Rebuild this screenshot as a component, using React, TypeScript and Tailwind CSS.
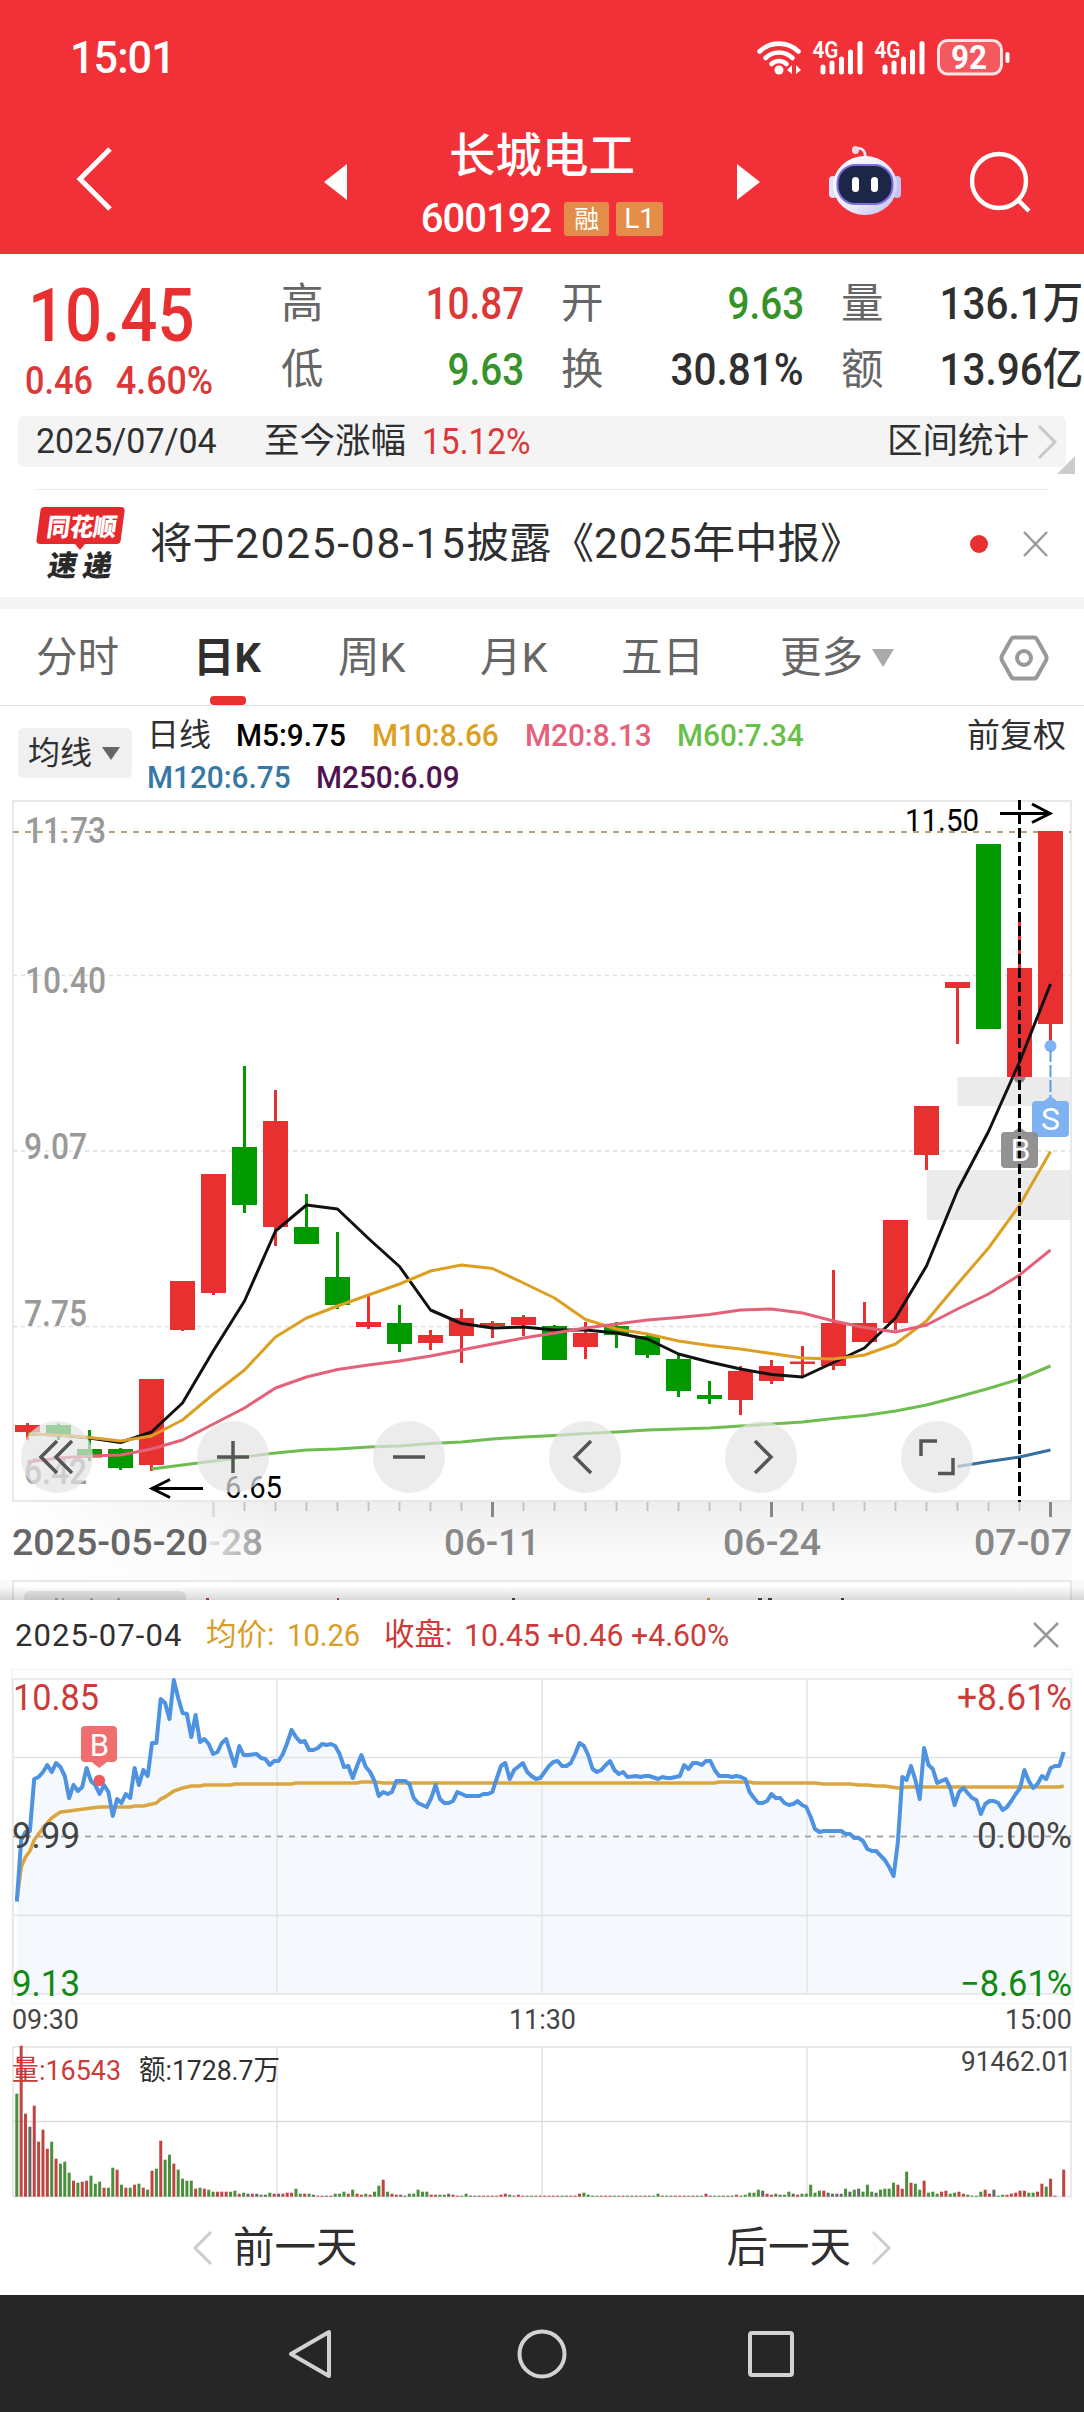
import type { ReactNode } from "react";

const RED = "#e83030";
const GREEN = "#009900";

const STEP = 31;
const FIRST = 27.5;
const cx = (i: number) => FIRST + i * STEP;

// [color, high, body top, body bottom, low]
const candles: [string, number, number, number, number][] = [
  ["r", 1423, 1425, 1432, 1440],
  ["g", 1423.5, 1425, 1436, 1440],
  ["g", 1430, 1449, 1457.5, 1461],
  ["g", 1448, 1449, 1468, 1470],
  ["r", 1379, 1379, 1465, 1471],
  ["r", 1281, 1281, 1330, 1331],
  ["r", 1174, 1174, 1293, 1295],
  ["g", 1066, 1147, 1205, 1213],
  ["r", 1090, 1121, 1227, 1246],
  ["g", 1194, 1227, 1244, 1244],
  ["g", 1232, 1277, 1305, 1309],
  ["r", 1296, 1322, 1327, 1329],
  ["g", 1305, 1323, 1344, 1352],
  ["r", 1330, 1335, 1343, 1350],
  ["r", 1309, 1318, 1336, 1363],
  ["r", 1321, 1323, 1326, 1338],
  ["r", 1315, 1317, 1325, 1336],
  ["g", 1325, 1326, 1360, 1360],
  ["r", 1322, 1333, 1347, 1359],
  ["g", 1322, 1326, 1335, 1348],
  ["g", 1334, 1336, 1355, 1358],
  ["g", 1355, 1359, 1391, 1397],
  ["g", 1381, 1395, 1399, 1404],
  ["r", 1366, 1371, 1400, 1415],
  ["r", 1360, 1366, 1381, 1384],
  ["r", 1346, 1361.5, 1364, 1376],
  ["r", 1270, 1323, 1366, 1370],
  ["r", 1302, 1323, 1342, 1342],
  ["r", 1220, 1220, 1323, 1330],
  ["r", 1106, 1106, 1155, 1170],
  ["r", 982, 982, 988, 1044],
  ["g", 844, 844, 1029, 1029],
  ["r", 913, 968, 1077, 1077],
  ["r", 831, 831, 1024, 1045],
];

const averages = [
  { color: "#111111", start: 0, ys: [1434, 1435, 1438, 1442.5, 1432, 1403, 1350.5, 1301, 1231, 1205, 1209, 1238.5, 1266.5, 1310, 1323.5, 1328, 1327, 1330, 1330, 1333, 1339, 1354, 1362, 1369, 1374.5, 1377, 1362.5, 1348, 1318, 1266, 1190.5, 1131.5, 1062, 984] },
  { color: "#dd9f22", start: 0, ys: [1434, 1435, 1437.5, 1441, 1436, 1420, 1394, 1370, 1337, 1318, 1306, 1295, 1284, 1271, 1265, 1268.5, 1283, 1298, 1319.5, 1329, 1334, 1341, 1345.5, 1349, 1353.5, 1358, 1359, 1355, 1344, 1321, 1284, 1248, 1205.5, 1151.5] },
  { color: "#e5617a", start: 0, ys: [1462, 1458, 1456, 1455, 1449, 1440, 1424, 1408, 1388, 1377, 1369.5, 1365, 1361, 1356, 1350, 1344, 1338, 1333, 1328, 1324, 1320, 1317.5, 1314.5, 1310, 1309, 1313, 1321, 1327.5, 1332, 1325, 1309, 1294, 1275, 1250] },
  { color: "#6fbd50", start: 4, ys: [1469, 1465, 1461, 1457, 1453, 1450, 1449, 1447, 1446, 1443.5, 1442, 1439, 1437, 1435.5, 1433.5, 1432, 1430, 1429, 1428, 1426, 1424, 1422, 1418.5, 1415.5, 1411, 1405, 1397, 1388.5, 1379, 1366] },
  { color: "#35709f", start: 30, ys: [1466.5, 1461.5, 1457, 1450] },
];

// minute, y offset inside the intraday chart
const price = "0,241.7 1,180 2,172 3,171 4,119 5,117 6,112 7,105 8,112 9,103 10,107 11,116 12,138 13,125 14,131 15,127 16,108 17,121 18,125 19,134 20,125 21,132 22,156 23,139 24,143 25,134 26,138 27,108 28,125 29,110 30,116 31,83 32,83 33,39 34,43 35,59 36,20 37,38 38,53 39,54 40,77 41,55 42,82 43,79 44,84 45,94 46,92 47,83 48,79 49,93 50,106 51,86 52,95 53,95 55,94 56,98 57,99 58,105 59,101 60,101 61,94 62,83 63,70 64,77 65,82 66,81 67,90 68,90 69,88 70,84 71,85 72,84 73,86 74,94 75,107 76,106 77,118 78,106 79,95 80,107 81,112 82,121 83,136 84,132 85,134 86,132 87,121 89,121 90,124 91,138 92,143 94,147 95,138 96,125 97,139 98,143 99,143 100,141 101,132 103,136 106,136 107,134 108,134 109,132 110,119 111,106 112,103 113,119 114,110 116,103 117,112 118,116 119,119 120,118 121,112 122,106 123,102 124,101 125,106 126,106 127,103 128,94 129,83 130,86 131,95 132,109 133,112 134,110 135,105 136,101 137,110 138,114 139,112 140,117 142,116 143,117 144,116 145,116 147,119 148,117 149,118 150,118 152,116 153,105 154,109 155,103 156,103 157,105 158,101 159,101 160,110 161,116 163,116 164,117 165,116 166,117 167,119 168,132 169,138 170,143 171,143 172,141 173,134 174,138 175,138 176,143 177,145 178,144 179,141 180,145 181,147 182,157 183,169 184,172 185,171 189,171 190,174 191,174 192,178 193,178 194,181 195,189 196,191 197,191 199,200 200,207 201,216 202,182 203,117 204,120 205,106 206,120 207,139 208,88 209,105 210,109 211,123 212,121 213,119 214,128 215,145 216,132 217,128 218,133 219,138 220,140 221,154 222,144 223,141 224,141 225,143 226,150 227,147 228,141 229,134 230,128 231,110 232,121 233,128 234,124 235,116 236,119 237,108 238,106 239,106 240,92";
const average = "0,241 1,207 2,197 3,191 4,180 6,168 8,158 10,152 12,151 17,148 19,147 26,147 27,146 29,146 32,143 33,139 34,137 36,131 38,128 40,126 42,126 43,125 49,125 50,124 63,124 64,123 78,123 79,122 82,122 84,123 160,123 161,122 168,122 169,123 183,123 185,124 191,124 193,125 195,125 197,126 199,126 202,128 204,127 239,127 240,126";

const mx = (m: number) => 16.8 + m * 4.362;
const toPoints = (raw: string) =>
  raw
    .split(" ")
    .map((p) => {
      const [m, y] = p.split(",").map(Number);
      return `${mx(m).toFixed(1)},${(1660 + y).toFixed(1)}`;
    })
    .join(" ");

// one bar per minute: color letter + height
const volume = (
  "g103 r151 r83 k70 r91 r55 r67 r48 g55 r38 g33 g35 g24 r16 g14 r15 r16 g21 g13 g15 r9 g9 g29 r27 g12 r9 g9 r12 g13 r9 g7 r26 g28 r56 g37 g42 r33 g27 g18 g16 g16 r8 g9 r8 g7 g5 r5 r5 r5 g5 g6 r3 g4 k3 r3 k3 g2 k2 g4 r3 " +
  "k3 r3 r4 r4 g8 g3 r3 g3 k2 r1 r1 k1 r1 g3 g3 g5 r3 g7 r3 r2 g3 r2 g5 g11 r17 g5 r3 r2 k2 k1 g3 g3 g7 g5 g5 r2 r2 g2 g2 k3 r2 r1 g1 g3 k1 k1 k1 r1 k1 r1 r1 r2 r3 g2 r1 r2 r1 g1 g1 k1 " +
  "r1 r1 r1 r1 r1 g1 k1 r1 r1 r3 g4 g2 g1 g1 r1 r1 r1 g1 g1 r1 g1 k1 r1 g1 r1 k1 g1 g3 r1 g1 k1 r1 r1 r1 g1 r1 k1 g1 r3 k1 g1 g1 k1 k1 g1 r2 g1 g2 g4 g4 g7 k6 r3 r2 g3 k2 g2 g5 k3 r2 " +
  "g3 g3 g12 g4 g6 r6 k4 k3 k3 k3 g8 k5 g7 k8 g5 g12 g5 k4 g7 g8 g8 g14 r12 r8 g25 r14 g13 g7 r16 g4 g5 g3 r5 r6 g3 g4 r5 r3 g2 g1 g1 g5 r7 r3 k7 g1 g2 r2 r3 r4 r6 r6 g4 g4 r5 r13 g10 r18 r1 k0 r27"
).split(" ");

const barColor: Record<string, string> = { r: "#c04542", g: "#4a8f3c", k: "#666666" };

function Label({ x, y, w, size, color, weight = 400, end, children }: { x: number; y: number; w: number; size: number; color: string; weight?: number; end?: boolean; children: string }) {
  return (
    <text x={x} y={y} fontSize={size} fill={color} fontWeight={weight} textAnchor={end ? "end" : "start"} textLength={w} lengthAdjust="spacingAndGlyphs">
      {children}
    </text>
  );
}

function StatusBar() {
  return (
    <div className="flex h-[114px] items-center justify-between pl-[70px] pr-[72px] text-white">
      <span className="origin-left scale-x-[.96] text-[45px] font-medium leading-none tracking-[-1px]">15:01</span>
      <svg className="h-[40px] w-[257px]" viewBox="755 35 257 40" fill="none">
        <g stroke="white" strokeWidth="4.600" strokeLinecap="round">
          <path d="M759.5 49.5a28 28 0 0 1 39 0" />
          <path d="M765.5 56a19.5 19.5 0 0 1 27 0" />
          <path d="M771.5 62a11 11 0 0 1 15 0" />
        </g>
        <circle cx="779" cy="68" r="4.500" fill="white" />
        <path d="M792 63v9l-5-4zM796 63v9l5-4z" fill="white" />
        {[0, 62].map((dx) => (
          <g key={dx} transform={`translate(${dx} 0)`}>
            <text x="812.500" y="56" fontSize="24" fontWeight="600" fill="white" textLength="26" lengthAdjust="spacingAndGlyphs">4G</text>
            <g stroke="white" strokeWidth="5" strokeLinecap="round">
              <path d="M823 65v5M832 61v9M841.500 57v13M850.500 50v20M860 41.500v28.500" />
            </g>
          </g>
        ))}
        <rect x="938.500" y="38.500" width="63" height="33.500" rx="9" fill="white" fillOpacity=".2" stroke="white" strokeOpacity=".85" strokeWidth="3" />
        <text x="951" y="67" fontSize="33" fontWeight="700" fill="white" textLength="36" lengthAdjust="spacingAndGlyphs">92</text>
        <path d="M1007.500 52v7" stroke="white" strokeWidth="4" strokeLinecap="round" />
      </svg>
    </div>
  );
}

function Robot() {
  return (
    <svg className="h-[72px] w-[74px]" viewBox="0 0 74 72">
      <defs>
        <linearGradient id="shell" x1="0" y1="0" x2="1" y2="1">
          <stop offset="0" stopColor="#ffffff" />
          <stop offset=".6" stopColor="#eae8fc" />
          <stop offset="1" stopColor="#bdb8f2" />
        </linearGradient>
      </defs>
      <path d="M37 14C38 7 34 3 28 5" fill="none" stroke="#efeaff" strokeWidth="2.800" />
      <ellipse cx="27.500" cy="6" rx="3.500" ry="4" fill="#f3d9e8" />
      <rect x="1" y="32" width="8" height="22" rx="4" fill="#dfe2fb" />
      <rect x="65" y="32" width="8" height="22" rx="4" fill="#c6c3f4" />
      <ellipse cx="37" cy="41.500" rx="32" ry="29.500" fill="url(#shell)" />
      <rect x="9.500" y="21" width="55" height="39" rx="18" fill="#1c2748" stroke="#7f6ce0" strokeWidth="2" />
      <rect x="24" y="33" width="7" height="15" rx="3.500" fill="white" />
      <rect x="43" y="33" width="7" height="15" rx="3.500" fill="white" />
    </svg>
  );
}

function TitleBar() {
  return (
    <div className="flex h-[140px] items-start text-white">
      <svg className="ml-[74px] mt-[31px] h-[68px] w-[40px]" viewBox="0 0 40 68" fill="none">
        <path d="M36 4 6 34l30 30" stroke="white" strokeWidth="5" />
      </svg>
      <svg className="ml-[210px] mt-[50px] h-[36px] w-[23px]" viewBox="0 0 23 36">
        <path d="M23 0v36L0 18z" fill="white" />
      </svg>
      <div className="flex w-[390px] flex-col items-center pt-[17px]">
        <div className="text-[46.500px] font-medium leading-[50px]">长城电工</div>
        <div className="mt-[16px] flex h-[44px] items-center">
          <span className="mr-[13px] text-[40px] font-medium leading-none tracking-[-1px]">600192</span>
          <span className="mr-[7px] flex h-[34px] w-[45px] items-center justify-center rounded-[3px] bg-[#e48d4b] text-[25px] leading-none">融</span>
          <span className="flex h-[34px] w-[47px] items-center justify-center rounded-[3px] bg-[#e48d4b] text-[28px] leading-none">L1</span>
        </div>
      </div>
      <svg className="mt-[50px] h-[36px] w-[23px]" viewBox="0 0 23 36">
        <path d="M0 0v36l23-18z" fill="white" />
      </svg>
      <div className="ml-[68px] mt-[30px]">
        <Robot />
      </div>
      <svg className="ml-[67px] mt-[36px] h-[64px] w-[64px]" viewBox="0 0 64 64" fill="none" stroke="white" strokeWidth="4.400">
        <circle cx="30" cy="31" r="27" />
        <path d="M49 50l11 11" />
      </svg>
    </div>
  );
}

function Stat({ name, value, className = "scale-x-[.92] text-[#2f2f2f]" }: { name: string; value: string; className?: string }) {
  return (
    <div className="flex items-center justify-between whitespace-nowrap">
      <span className="text-[42.500px] leading-none text-[#666]">{name}</span>
      <span className={`origin-right text-[44px] font-medium leading-none ${className}`}>{value}</span>
    </div>
  );
}

function Quote() {
  return (
    <div className="flex h-[162px] overflow-hidden">
      <div className="w-[281px] shrink-0 text-[#e83030]">
        <div className="ml-[28px] mt-[24px] origin-left scale-x-[.87] text-[75px] font-medium leading-[75px]">10.45</div>
        <div className="ml-[25px] mt-[10px] flex text-[38px] font-medium leading-[37px] text-[#dc3838]">
          <span className="w-[91px] origin-left scale-x-[.9]">0.46</span>
          <span className="origin-left scale-x-[.94]">4.60%</span>
        </div>
      </div>
      <div className="grid auto-rows-[66px] grid-cols-[243px_243px_242px] gap-x-[37px] pt-[17px]">
        <Stat name="高" value="10.87" className="scale-x-[.88] text-[#dc3838]" />
        <Stat name="开" value="9.63" className="scale-x-[.88] text-[#36932a]" />
        <Stat name="量" value="136.1万" />
        <Stat name="低" value="9.63" className="scale-x-[.88] text-[#36932a]" />
        <Stat name="换" value="30.81%" />
        <Stat name="额" value="13.96亿" />
      </div>
    </div>
  );
}

function RangeBar() {
  return (
    <div className="relative mx-[18px] flex h-[51px] items-center rounded-md bg-[#f4f4f4] pl-[18px] pr-[9px] text-[35px] leading-none text-[#2f2f2f]">
      <span className="w-[228px] origin-left scale-x-[.97]">2025/07/04</span>
      <span className="text-[35.500px]">至今涨幅</span>
      <span className="ml-[16px] origin-left scale-x-[.93] text-[36px] text-[#dc3838]">15.12%</span>
      <span className="ml-auto text-[35.500px]">区间统计</span>
      <svg className="ml-[8px] h-[36px] w-[20px]" viewBox="0 0 20 36" fill="none">
        <path d="M2 2l16 16L2 34" stroke="#c8c8c8" strokeWidth="3" />
      </svg>
      <svg className="absolute right-[-9px] top-[40px] h-[18px] w-[18px]" viewBox="0 0 18 18">
        <path d="M18 0v18H0z" fill="#ccc" />
      </svg>
    </div>
  );
}

function News() {
  return (
    <div className="mx-[36px] mt-[22px] flex h-[108px] items-center border-t border-[#ebebeb] text-[#2f2f2f]">
      <svg className="h-[84px] w-[92px] overflow-visible" viewBox="0 -3 92 84">
        <path d="M8 2h77q4 0 3.600 4l-4 30q-.6 3-4 3H49l-5 6-5-6H4q-4 0-3.500-4l4-30Q5 2 8 2z" fill="#e5292d" />
        <g fontFamily="Noto Sans CJK SC" fontWeight="900">
          <text transform="skewX(-8)" x="14" y="31" fontSize="25" fill="white" textLength="70" lengthAdjust="spacingAndGlyphs">同花顺</text>
          <text transform="skewX(-10)" x="23" y="71" fontSize="29" fill="#2a2a2a" textLength="64">速递</text>
        </g>
      </svg>
      <span className="ml-[22px] whitespace-nowrap pt-px text-[42.500px] leading-none">
        将于<span className="tracking-[1.7px]">2025-08-15</span>披露《<span className="tracking-[.7px]">2025</span>年中报》
      </span>
      <span className="ml-auto size-[18px] rounded-full bg-[#e83030]" />
      <svg className="ml-[35px] h-[26px] w-[25px]" viewBox="0 0 25 26">
        <path d="M1 1l23 24M24 1L1 25" stroke="#999" strokeWidth="2.500" />
      </svg>
    </div>
  );
}

function Tabs() {
  return (
    <div className="flex h-[97px] items-center border-b border-[#dedede] pt-[2px] text-[41.500px] leading-none text-[#666]">
      <span className="ml-[36px] w-[157px]">分时</span>
      <span className="relative flex h-full w-[145px] items-center font-bold text-[#2f2f2f]">
        日K
        <i className="absolute bottom-0 left-[17px] h-[9px] w-[36px] rounded-[4px] bg-[#e83030]" />
      </span>
      <span className="w-[142px]">周K</span>
      <span className="w-[141px]">月K</span>
      <span className="w-[159px]">五日</span>
      <span>更多</span>
      <svg className="ml-[9px] h-[18px] w-[22px]" viewBox="0 0 22 18">
        <path d="M0 0h22L11 18z" fill="#aaa" />
      </svg>
      <svg className="ml-auto mr-[35px] h-[46px] w-[50px]" viewBox="0 0 50 46" fill="none" stroke="#999" strokeWidth="4">
        <path d="M15 2.500h20q2 0 3 2l9 16q1 2.500 0 5l-9 16q-1 2-3 2H15q-2 0-3-2l-9-16q-1-2.500 0-5l9-16q1-2 3-2z" />
        <circle cx="25" cy="23" r="7" />
      </svg>
    </div>
  );
}

function MaLegend() {
  return (
    <div className="flex h-[94px] px-[18px] text-[32px] leading-none text-[#2f2f2f]">
      <div className="mt-[22px] flex h-[50px] w-[114px] items-center rounded-md bg-[#f0f0f0] pl-[10px]">
        均线
        <svg className="ml-[10px] h-[13px] w-[18px]" viewBox="0 0 18 13">
          <path d="M0 0h18L9 13z" fill="#666" />
        </svg>
      </div>
      <div className="ml-[15px] pt-[13px] font-medium">
        <div className="flex whitespace-nowrap">
          <span className="w-[89px] font-normal">日线</span>
          <span className="w-[136px] origin-left scale-x-[.93] text-black">M5:9.75</span>
          <span className="w-[153px] origin-left scale-x-[.93] text-[#dd9f22]">M10:8.66</span>
          <span className="w-[152px] origin-left scale-x-[.93] text-[#e5617a]">M20:8.13</span>
          <span className="origin-left scale-x-[.93] text-[#6abf4b]">M60:7.34</span>
        </div>
        <div className="mt-[10px] flex whitespace-nowrap">
          <span className="w-[169px] origin-left scale-x-[.93] text-[#3577a5]">M120:6.75</span>
          <span className="origin-left scale-x-[.93] text-[#4f1450]">M250:6.09</span>
        </div>
      </div>
      <span className="ml-auto pt-[13px] text-[33px]">前复权</span>
    </div>
  );
}

function RoundButton({ children }: { children: ReactNode }) {
  return (
    <button type="button" className="flex size-[72px] items-center justify-center rounded-full bg-[#e4e4e4]/70">
      <svg className="size-[40px]" viewBox="0 0 40 40" fill="none" stroke="#555" strokeWidth="3.500">
        {children}
      </svg>
    </button>
  );
}

function KChart() {
  return (
    <div className="relative h-[780px]">
      <svg className="block h-[780px] w-full" viewBox="0 800 1084 780">
        <defs>
          <linearGradient id="axisY" x1="0" y1="0" x2="0" y2="1">
            <stop offset="0" stopColor="#eeeeee" />
            <stop offset=".6" stopColor="#f9f9f9" />
            <stop offset="1" stopColor="#fafafa" />
          </linearGradient>
          <linearGradient id="axisX" x1="0" y1="0" x2="1" y2="0">
            <stop offset="0" stopColor="#fff" />
            <stop offset="1" stopColor="#fff" stopOpacity="0" />
          </linearGradient>
          <linearGradient id="fade" x1="0" y1="0" x2="1" y2="0">
            <stop offset="0" stopColor="#e4e4e4" />
            <stop offset="1" stopColor="#999" />
          </linearGradient>
        </defs>

        <rect x="12" y="1502" width="1060" height="78" fill="url(#axisY)" />
        <rect x="12" y="1502" width="260" height="78" fill="url(#axisX)" />
        <rect x="957.500" y="1077" width="113.500" height="29" fill="#ebebeb" />
        <rect x="927" y="1170" width="144" height="50" fill="#ebebeb" />
        <rect x="13" y="801" width="1058" height="700" fill="none" stroke="#e8e8e8" strokeWidth="2" />
        <path d="M13 832h1058" stroke="#b5a27c" strokeWidth="2" strokeDasharray="6 6" />
        <path d="M13 975.500h1058M13 1151h1058M13 1326.500h1058" stroke="#e0e0e0" strokeWidth="1.500" strokeDasharray="4 4" />

        <Label x={25} y={843} w={81} size={36} color="#999" weight={500}>11.73</Label>
        <Label x={25} y={993} w={81} size={36} color="#999" weight={500}>10.40</Label>
        <Label x={24} y={1159} w={63} size={36} color="#999" weight={500}>9.07</Label>
        <Label x={24} y={1326} w={63} size={36} color="#999" weight={500}>7.75</Label>
        <Label x={24} y={1484} w={63} size={36} color="#999" weight={500}>6.42</Label>

        {candles.map(([c, high, top, bottom, low], i) => (
          <g key={i} fill={c === "r" ? RED : GREEN}>
            <rect x={cx(i) - 1.5} y={high} width="3" height={low - high} />
            <rect x={cx(i) - 12.5} y={top} width="25" height={bottom - top} />
          </g>
        ))}
        {averages.map((a) => (
          <polyline key={a.color} points={a.ys.map((y, i) => `${cx(a.start + i)},${y}`).join(" ")} fill="none" stroke={a.color} strokeWidth="3" strokeLinejoin="round" />
        ))}

        <circle cx="1050.500" cy="1046" r="6" fill="#7fb2f2" />
        <path d="M1050.500 1050v47" stroke="#5b9be6" strokeWidth="2" strokeDasharray="12 3" />
        <path d="M1036 1101h8l6.500-5 6.500 5h8q4 0 4 4v28q0 4-4 4h-29q-4 0-4-4v-28q0-4 4-4z" fill="#7fb2f2" />
        <path d="M1013.500 1077a6 6 0 0 0 12 0z" fill="#888" />
        <path d="M1005 1132h8l6.500-5 6.500 5h8q4 0 4 4v28q0 4-4 4h-29q-4 0-4-4v-28q0-4 4-4z" fill="#8c8c8c" fillOpacity=".95" />
        <path d="M1019.500 800v702" stroke="black" strokeWidth="3" strokeDasharray="10 4" />
        <text x="1050.500" y="1130" fontSize="32" fill="white" textAnchor="middle">S</text>
        <text x="1020.500" y="1161" fontSize="32" fill="white" textAnchor="middle">B</text>

        <Label x={905} y={831} w={74} size={31} color="black">11.50</Label>
        <path d="M1000 813.500h49M1032 804l18 9.500-18 9" fill="none" stroke="black" strokeWidth="3" />
        <Label x={225} y={1498} w={57} size={31} color="black">6.65</Label>
        <path d="M203 1488.500h-50M170 1479.500l-18 9 18 9" fill="none" stroke="black" strokeWidth="3" />

        {Array.from({ length: 28 }, (_, k) => k + 6).map((i) => {
          const major = (i - 6) % 9 === 0;
          const color = i === 6 ? "#dcdcdc" : major ? "#888" : "#c4c4c4";
          return <path key={i} d={`M${cx(i)} 1502v${major ? 15 : 9}`} stroke={color} strokeWidth={major ? 3 : 2} />;
        })}
        <Label x={12} y={1555} w={196} size={36} color="#666" weight={500}>2025-05-20</Label>
        <Label x={208} y={1555} w={55} size={36} color="url(#fade)" weight={500}>-28</Label>
        <Label x={444} y={1555} w={96} size={36} color="#888" weight={500}>06-11</Label>
        <Label x={723} y={1555} w={98} size={36} color="#888" weight={500}>06-24</Label>
        <Label x={974} y={1555} w={98} size={36} color="#888" weight={500}>07-07</Label>
      </svg>

      <div className="absolute left-[21px] top-[621px] flex gap-[104px]">
        <RoundButton><path d="M20 4L4 20l16 16M35 4L19 20l16 16" /></RoundButton>
        <RoundButton><path d="M4 20h32M20 4v32" /></RoundButton>
        <RoundButton><path d="M4 20h32" /></RoundButton>
        <RoundButton><path d="M26 4L10 20l16 16" /></RoundButton>
        <RoundButton><path d="M14 4l16 16-16 16" /></RoundButton>
        <RoundButton><path d="M4 19V4h16M21 36.500h15V21" /></RoundButton>
      </div>
    </div>
  );
}

// top edge of the next indicator, cut off by the day panel
function NextIndicator() {
  return (
    <div className="relative h-[20px] overflow-hidden bg-[#fafafa]">
      <div className="mx-[12px] h-[30px] border-2 border-[#e8e8e8] bg-white px-[10px] pt-[9px]">
        <div className="h-[20px] w-[162px] rounded-md bg-[#e8e8e8]" />
      </div>
      <svg className="absolute bottom-0 left-0 h-[2px] w-full" viewBox="0 0 1084 2">
        <path d="M206 0h3v2h-3zM337 0h2v2h-2z" fill="#d04040" />
        <path d="M512 0h3v2h-3zM758 0h4v2h-4zM768 0h4v2h-4zM841 0h3v2h-3z" fill="#444" />
        <path d="M707 0h3v2h-3z" fill="#dd9f22" />
        <path d="M55 0h3v2h-3zM62 0h2v2h-2zM90 0h3v2h-3zM117 0h3v2h-3z" fill="#aaa" />
      </svg>
      <div className="absolute inset-x-0 bottom-0 h-[14px] bg-gradient-to-b from-transparent to-black/15" />
    </div>
  );
}

function DayHeader() {
  return (
    <div className="flex h-[66px] items-center pl-[15px] pr-[25px] pt-[4px] text-[31px] leading-none text-[#2f2f2f]">
      <span className="w-[191px] whitespace-nowrap tracking-[1.1px]">2025-07-04</span>
      <span className="flex w-[178px] items-center text-[#d99d28]">
        <span className="w-[81px] text-[30.500px]">均价:</span>
        <span className="origin-left scale-x-[.94]">10.26</span>
      </span>
      <span className="flex items-center text-[#cc3b38]">
        <span className="w-[80px] text-[30.500px]">收盘:</span>
        <span className="origin-left scale-x-[.975] whitespace-nowrap">10.45 +0.46 +4.60%</span>
      </span>
      <svg className="ml-auto h-[26px] w-[26px]" viewBox="0 0 26 26">
        <path d="M1 1l24 24M25 1L1 25" stroke="#999" strokeWidth="2.500" />
      </svg>
    </div>
  );
}

function DayChart() {
  const line = toPoints(price);
  return (
    <svg className="block h-[374px] w-full" viewBox="0 1666 1084 374">
      <polygon points={`${mx(0)},1994 ${line} ${mx(240)},1752 1069,1752 1069,1994`} fill="#f5f9fe" />
      <rect x="12" y="1669.500" width="1060" height="334" fill="none" stroke="#f4f4f4" strokeWidth="1.500" />
      <rect x="13" y="1679" width="1058" height="315" fill="none" stroke="#e9eaec" strokeWidth="2" />
      <path d="M277 1679v315M542 1679v315M807 1679v315" stroke="#e8eaec" strokeWidth="2" />
      <path d="M13 1757.500h1058M13 1915.500h1058" stroke="#e0e3e6" strokeWidth="1.300" />
      <path d="M13 1836.500h1058" stroke="#a5a8ab" strokeWidth="2" strokeDasharray="6 6" />
      <polyline points={toPoints(average)} fill="none" stroke="#dba640" strokeWidth="3.600" strokeLinejoin="round" />
      <polyline points={line} fill="none" stroke="#4e92e2" strokeWidth="4" strokeLinejoin="round" />

      <circle cx="99.300" cy="1780.500" r="5.800" fill="#ee5a5f" />
      <path d="M85 1726h28q4 0 4 4v28q0 4-4 4h-6l-7.700 6-7.700-6H85q-4 0-4-4v-28q0-4 4-4z" fill="#f06e6e" />
      <text x="99.300" y="1755.500" fontSize="31" fill="white" textAnchor="middle">B</text>

      <Label x={13} y={1710} w={86} size={36} color="#cc3b38">10.85</Label>
      <Label x={12} y={1848} w={68} size={36} color="#444">9.99</Label>
      <Label x={12} y={1996} w={68} size={36} color="#128a12">9.13</Label>
      <Label x={1072} y={1710} w={115} size={36} color="#cc3b38" end>+8.61%</Label>
      <Label x={1072} y={1848} w={95} size={36} color="#444" end>0.00%</Label>
      <Label x={1072} y={1996} w={112} size={36} color="#128a12" end>−8.61%</Label>
      <Label x={12} y={2029} w={67} size={28} color="#444">09:30</Label>
      <Label x={509} y={2029} w={67} size={28} color="#444">11:30</Label>
      <Label x={1072} y={2029} w={67} size={28} color="#444" end>15:00</Label>
    </svg>
  );
}

function VolumeChart() {
  return (
    <svg className="block h-[160px] w-full" viewBox="0 2040 1084 160">
      <rect x="13" y="2047" width="1058" height="149.500" fill="none" stroke="#e9e9e9" strokeWidth="2" />
      <path d="M277 2047v150M542 2047v150M807 2047v150" stroke="#e9e9e9" strokeWidth="2" />
      <path d="M13 2121.500h1058" stroke="#dcdcdc" strokeWidth="1.300" />
      {volume.map((v, i) => {
        const h = Number(v.slice(1));
        return h > 0 && <rect key={i} x={mx(i) - 1.5} y={2196.7 - h} width="3" height={h} fill={barColor[v[0]]} />;
      })}
      <Label x={12} y={2080} w={109} size={28} color="#cc3b38">量:16543</Label>
      <Label x={139} y={2080} w={141} size={28} color="#2f2f2f">额:1728.7万</Label>
      <Label x={1071} y={2071} w={110} size={28} color="#444" end>91462.01</Label>
    </svg>
  );
}

function DaySwitch() {
  return (
    <div className="flex h-[95px] items-center text-[41.500px] leading-none text-[#2f2f2f]">
      <svg className="ml-[191px] h-[36px] w-[22px]" viewBox="0 0 22 36" fill="none">
        <path d="M20 2L4 18l16 16" stroke="#ccc" strokeWidth="3" />
      </svg>
      <span className="ml-[20px]">前一天</span>
      <span className="ml-[369px]">后一天</span>
      <svg className="ml-[20px] h-[36px] w-[22px]" viewBox="0 0 22 36" fill="none">
        <path d="M2 2l16 16L2 34" stroke="#ccc" strokeWidth="3" />
      </svg>
    </div>
  );
}

function SystemNav() {
  return (
    <div className="flex h-[117px] items-center bg-[#262626]">
      <svg className="ml-[286px] h-[54px] w-[48px]" viewBox="0 0 48 54" fill="none" stroke="#d2d2d2" strokeWidth="4" strokeLinejoin="round">
        <path d="M43 5v44L5 27z" />
      </svg>
      <svg className="ml-[181px] size-[54px]" viewBox="0 0 54 54" fill="none" stroke="#d2d2d2" strokeWidth="4">
        <circle cx="27" cy="27" r="22.500" />
      </svg>
      <svg className="ml-[177px] size-[50px]" viewBox="0 0 50 50" fill="none" stroke="#d2d2d2" strokeWidth="4">
        <rect x="4" y="4" width="42" height="42" rx="2" />
      </svg>
    </div>
  );
}

export default function App() {
  return (
    <div className="w-[1084px] overflow-hidden bg-white font-['Roboto','Noto_Sans_CJK_SC',sans-serif]">
      <header className="bg-[#f13037]">
        <StatusBar />
        <TitleBar />
      </header>
      <Quote />
      <RangeBar />
      <News />
      <div className="h-[12px] bg-[#f4f4f4]" />
      <Tabs />
      <MaLegend />
      <KChart />
      <NextIndicator />
      <DayHeader />
      <DayChart />
      <VolumeChart />
      <DaySwitch />
      <SystemNav />
    </div>
  );
}
